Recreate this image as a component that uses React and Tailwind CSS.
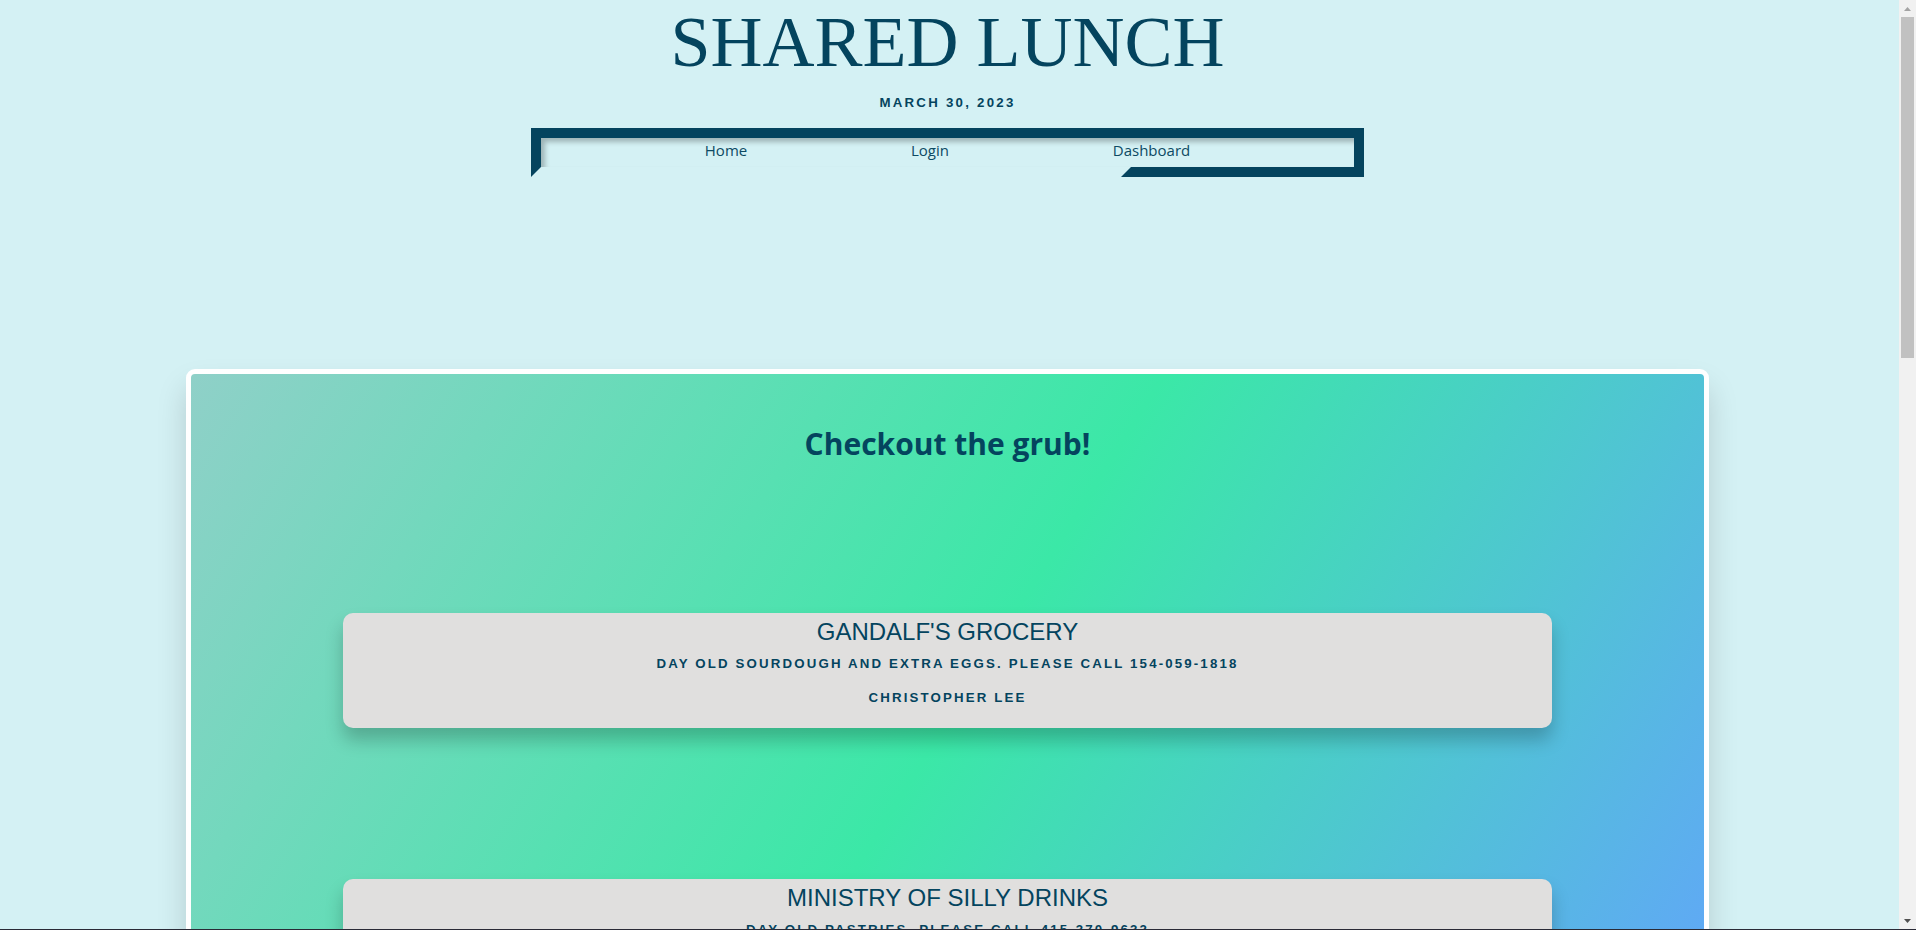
import React from "react";

const cards = [
  { title: "GANDALF'S GROCERY", desc: "DAY OLD SOURDOUGH AND EXTRA EGGS. PLEASE CALL 154-059-1818", name: "CHRISTOPHER LEE" },
  { title: "MINISTRY OF SILLY DRINKS", desc: "DAY OLD PASTRIES. PLEASE CALL 415-370-9632", name: "JOHN CLEESE" },
  { title: "THE PRANCING PONY", desc: "LEFTOVER STEW AND FRESH BREAD. PLEASE CALL 212-555-0147", name: "BARLIMAN BUTTERBUR" },
  { title: "CHEESE SHOPPE", desc: "ASSORTED CHEESES NEAR DATE. PLEASE CALL 303-488-2210", name: "MICHAEL PALIN" },
  { title: "GREEN DRAGON INN", desc: "EXTRA ALE AND MEAT PIES. PLEASE CALL 617-222-9034", name: "SEAN ASTIN" },
  { title: "SPAM CAFE", desc: "SPAM, EGGS AND BAKED BEANS. PLEASE CALL 702-119-4471", name: "TERRY JONES" },
  { title: "BAG END BAKERY", desc: "SEED CAKES AND MUFFINS. PLEASE CALL 503-640-7785", name: "IAN HOLM" },
];

function Scrollbar() {
  return (
    <div className="flex w-[17px] shrink-0 flex-col bg-[#f1f1f1]">
      <div className="flex h-[17px] items-center justify-center">
        <svg width="9" height="6" viewBox="0 0 9 6">
          <polygon points="4.5,1 8,5 1,5" fill="#a3a3a3" />
        </svg>
      </div>
      <div className="mx-[2px] h-[341px] bg-[#c1c1c1]" />
      <div className="flex-1" />
      <div className="flex h-[17px] items-center justify-center">
        <svg width="9" height="6" viewBox="0 0 9 6">
          <polygon points="1,1 8,1 4.5,5" fill="#505050" />
        </svg>
      </div>
    </div>
  );
}

export default function App() {
  return (
    <div className="flex h-screen flex-col overflow-hidden">
      <div className="flex min-h-0 flex-1">
        <div className="min-w-0 flex-1 overflow-hidden bg-[#d4f1f4]">
          <div className="pr-[4px] pt-[2px] pb-[34px]">
            <h1 className="m-0 text-center font-['Liberation_Serif',serif] text-[72px] font-normal leading-[80px] text-[#04445e]">
              SHARED LUNCH
            </h1>
            <p className="mt-[13px] text-center font-['Liberation_Sans',Arial,sans-serif] text-[13.28px] font-bold leading-[16px] tracking-[2.25px] text-[#04445e]">
              MARCH 30, 2023
            </p>
            <nav className="relative mx-auto mt-[17px] w-[833px] border-[10px] border-[#04445e] border-b-transparent">
              <div className="flex h-[29px] items-start justify-evenly pt-[2px] shadow-[inset_4px_4px_5px_rgba(0,0,0,0.25)] font-['Open_Sans',sans-serif] text-[15px] leading-[20px] text-[#0d4a63]">
                <a href="#">Home</a>
                <a href="#">Login</a>
                <a href="#">Dashboard</a>
              </div>
              <span className="absolute -bottom-[10px] -right-[10px] h-0 w-[243px] border-b-[10px] border-l-[10px] border-b-[#04445e] border-l-transparent" />
            </nav>

            <main className="mx-auto mt-[192px] w-[1523px] rounded-[9px] border-[5px] border-white bg-[linear-gradient(122deg,#8fd0c8_0px,#3be8a7_826px,#60a8f6_1600px)] pt-[50px] pb-[80px] shadow-[0_18px_30px_rgba(0,0,0,0.15)]">
              <h2 className="text-center font-['Open_Sans',sans-serif] text-[30px] font-bold leading-[40px] text-[#04445e]">
                Checkout the grub!
              </h2>
              <div className="mt-[149px] flex flex-col items-center gap-[151px]">
                {cards.map((c) => (
                  <div
                    key={c.title}
                    className="w-[1209px] rounded-[10px] bg-[#e0dfde] pt-[5px] pb-[22px] text-center text-[#04445e] shadow-[0_12px_18px_rgba(0,0,0,0.22)] font-['Liberation_Sans',Arial,sans-serif]"
                  >
                    <h3 className="text-[24px] font-normal leading-[28px]">{c.title}</h3>
                    <h5 className="mt-[10px] text-[13.28px] font-bold leading-[16px] tracking-[2.15px]">{c.desc}</h5>
                    <h5 className="mt-[18px] text-[13.28px] font-bold leading-[16px] tracking-[2.15px]">{c.name}</h5>
                  </div>
                ))}
              </div>
            </main>
          </div>
        </div>
        <Scrollbar />
      </div>
      <div className="h-[1px] shrink-0 bg-[#2a2a36]" />
    </div>
  );
}
